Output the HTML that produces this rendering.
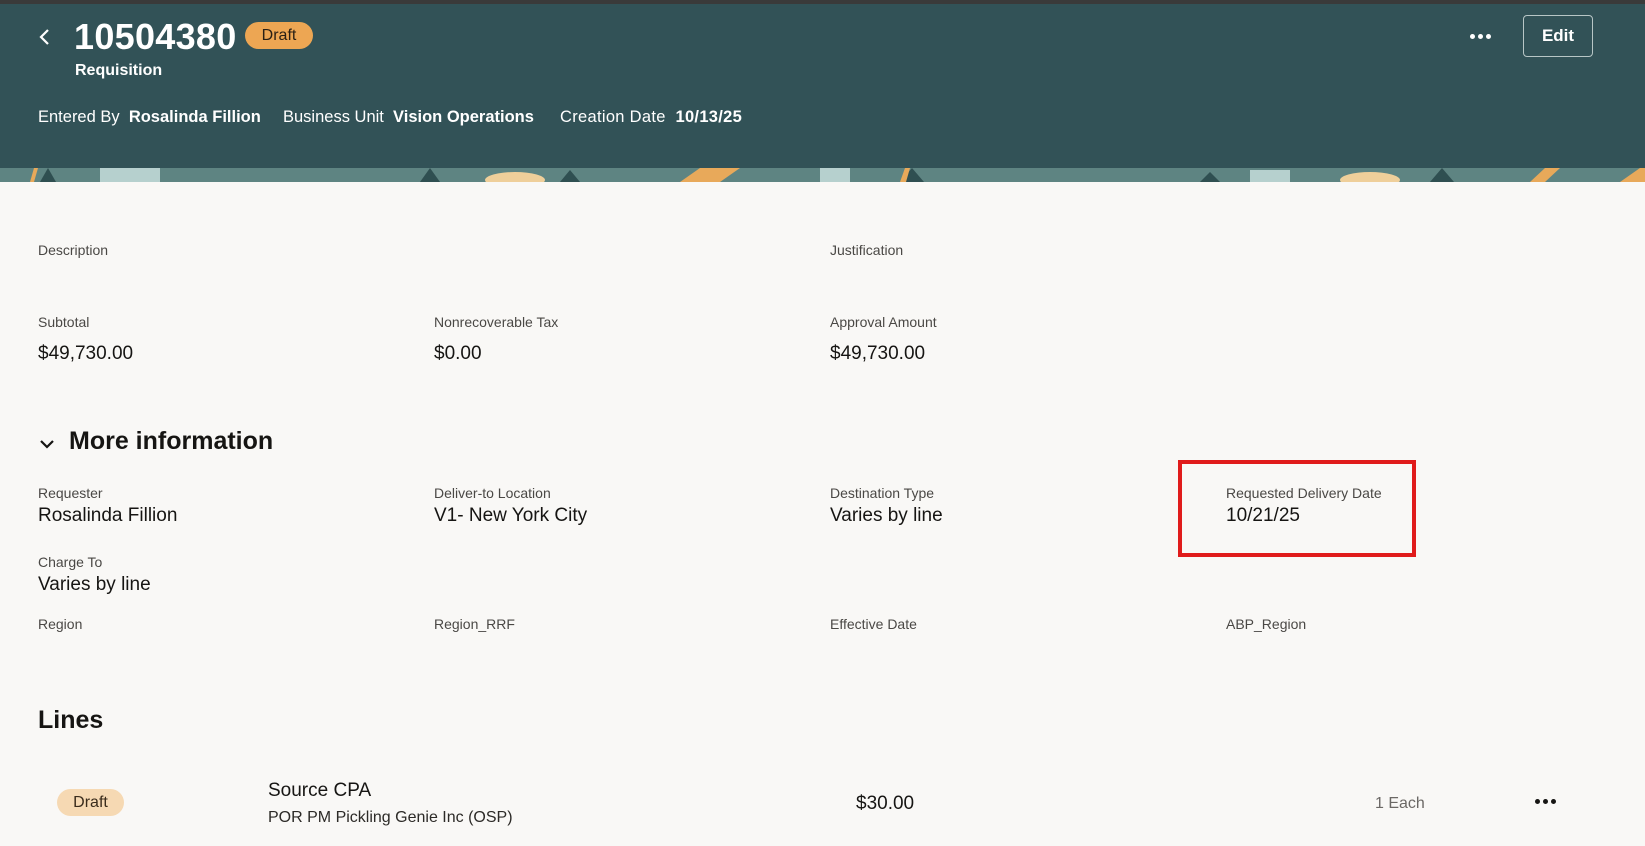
<!DOCTYPE html>
<html><head><meta charset="utf-8"><style>
*{margin:0;padding:0;box-sizing:border-box}
body{width:1645px;height:846px;overflow:hidden;background:#f9f8f6;font-family:"Liberation Sans",sans-serif;color:#161513;position:relative}
.a{position:absolute;white-space:nowrap}
.hdr{position:absolute;left:0;top:0;width:1645px;height:168px;background:#325257;border-top:4px solid #3a3a3a}
.band{position:absolute;left:0;top:168px;width:1645px;height:14px;overflow:hidden;background:#5a817f}
.w{color:#fff}
.lbl{font-size:14px;color:#4a4845}
.val{font-size:19px;color:#161513}
.dots{position:absolute;display:flex;gap:3px}
.dots i{display:block;width:5px;height:5px;border-radius:50%}
</style></head><body>
<div class="hdr"></div>
<div class="band"><svg width="1645" height="14">
<rect x="0" y="0" width="1645" height="14" fill="#5e8482"/>
<g fill="#2f4f51"><path d="M40 14 L48 0 L56 14Z"/><path d="M420 14 L430 0 L440 14Z"/><path d="M560 14 L570 2 L580 14Z"/><path d="M900 14 L912 0 L924 14Z"/><path d="M1430 14 L1442 0 L1454 14Z"/><path d="M1200 14 L1210 4 L1220 14Z"/></g>
<g fill="#e8a95a"><path d="M30 14 L34 0 L38 0 L34 14Z"/><path d="M680 14 L700 0 L740 0 L720 14Z"/><path d="M900 14 L905 0 L910 0 L906 14Z"/><path d="M1530 14 L1545 0 L1560 0 L1545 14Z"/><path d="M1620 14 L1640 0 L1645 0 L1645 14Z"/></g>
<g fill="#efcf9a"><ellipse cx="515" cy="12" rx="30" ry="8"/><ellipse cx="1370" cy="12" rx="30" ry="8"/></g>
<g fill="#b6d0ce"><rect x="100" y="0" width="60" height="14"/><rect x="820" y="0" width="30" height="14"/><rect x="1250" y="2" width="40" height="12"/></g>
</svg></div>
<svg class="a" style="left:38px;top:27px" width="14" height="20"><path d="M10 3 L3 10 L10 17" stroke="#fff" stroke-width="2.2" fill="none"/></svg>
<div class="a w" style="left:74px;top:16px;font-size:36px;font-weight:bold;letter-spacing:0.3px">10504380</div>
<div class="a" style="left:245px;top:22px;width:68px;height:27px;border-radius:14px;background:#eda653;font-size:16px;line-height:27px;text-align:center;color:#2a2015">Draft</div>
<div class="a w" style="left:75px;top:62px;font-size:16px;font-weight:bold">Requisition</div>
<div class="a w" style="left:38px;top:108px;font-size:16.5px">Entered By&nbsp; <b>Rosalinda Fillion</b></div>
<div class="a w" style="left:283px;top:108px;font-size:16.5px">Business Unit&nbsp; <b>Vision Operations</b></div>
<div class="a w" style="left:560px;top:108px;font-size:16.5px;letter-spacing:0.3px">Creation Date&nbsp; <b>10/13/25</b></div>
<div class="dots" style="left:1470px;top:34px"><i style="background:#fff"></i><i style="background:#fff"></i><i style="background:#fff"></i></div>
<div class="a w" style="left:1523px;top:15px;width:70px;height:42px;border:1px solid #b8c6c6;border-radius:4px;font-size:17px;font-weight:bold;line-height:40px;text-align:center">Edit</div>

<div class="a lbl" style="left:38px;top:242px">Description</div>
<div class="a lbl" style="left:830px;top:242px">Justification</div>
<div class="a lbl" style="left:38px;top:314px">Subtotal</div>
<div class="a lbl" style="left:434px;top:314px">Nonrecoverable Tax</div>
<div class="a lbl" style="left:830px;top:314px">Approval Amount</div>
<div class="a val" style="left:38px;top:343px">$49,730.00</div>
<div class="a val" style="left:434px;top:343px">$0.00</div>
<div class="a val" style="left:830px;top:343px">$49,730.00</div>

<svg class="a" style="left:38px;top:437px" width="18" height="14"><path d="M3 4 L9 10 L15 4" stroke="#161513" stroke-width="2.2" fill="none"/></svg>
<div class="a" style="left:69px;top:427px;font-size:25px;font-weight:bold">More information</div>

<div class="a lbl" style="left:38px;top:485px">Requester</div>
<div class="a lbl" style="left:434px;top:485px">Deliver-to Location</div>
<div class="a lbl" style="left:830px;top:485px">Destination Type</div>
<div class="a lbl" style="left:1226px;top:485px">Requested Delivery Date</div>
<div class="a val" style="left:38px;top:505px">Rosalinda Fillion</div>
<div class="a val" style="left:434px;top:505px">V1- New York City</div>
<div class="a val" style="left:830px;top:505px">Varies by line</div>
<div class="a val" style="left:1226px;top:505px">10/21/25</div>
<div class="a" style="left:1178px;top:460px;width:238px;height:97px;border:4px solid #e01b1b"></div>

<div class="a lbl" style="left:38px;top:554px">Charge To</div>
<div class="a val" style="left:38px;top:574px">Varies by line</div>
<div class="a lbl" style="left:38px;top:616px">Region</div>
<div class="a lbl" style="left:434px;top:616px">Region_RRF</div>
<div class="a lbl" style="left:830px;top:616px">Effective Date</div>
<div class="a lbl" style="left:1226px;top:616px">ABP_Region</div>

<div class="a" style="left:38px;top:706px;font-size:25px;font-weight:bold">Lines</div>
<div class="a" style="left:57px;top:789px;width:67px;height:27px;border-radius:14px;background:#f6d9b3;font-size:16px;line-height:27px;text-align:center;color:#3a2c1c">Draft</div>
<div class="a" style="left:268px;top:780px;font-size:19px">Source CPA</div>
<div class="a" style="left:268px;top:809px;font-size:16px;color:#2c2a27">POR PM Pickling Genie Inc (OSP)</div>
<div class="a" style="left:856px;top:793px;font-size:19px">$30.00</div>
<div class="a" style="left:1375px;top:795px;font-size:16px;color:#6b6865">1 Each</div>
<div class="dots" style="left:1535px;top:799px"><i style="background:#161513"></i><i style="background:#161513"></i><i style="background:#161513"></i></div>
</body></html>
